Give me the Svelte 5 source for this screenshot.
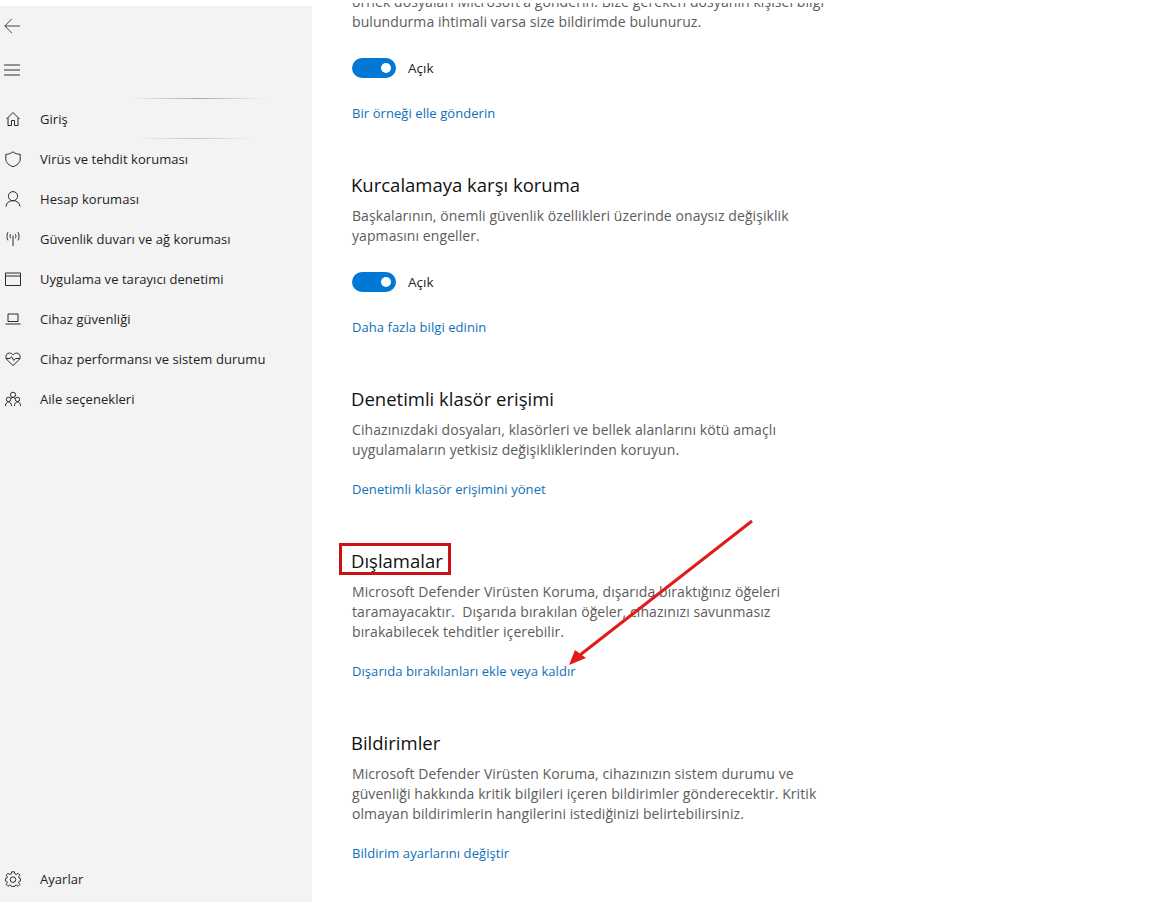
<script lang="ts">
  const NAV = [
    { label: 'Giriş', icon: 'home' },
    { label: 'Virüs ve tehdit koruması', icon: 'shield' },
    { label: 'Hesap koruması', icon: 'person' },
    { label: 'Güvenlik duvarı ve ağ koruması', icon: 'radio' },
    { label: 'Uygulama ve tarayıcı denetimi', icon: 'window' },
    { label: 'Cihaz güvenliği', icon: 'laptop' },
    { label: 'Cihaz performansı ve sistem durumu', icon: 'heart' },
    { label: 'Aile seçenekleri', icon: 'family' },
  ]

  const ICONS: Record<string, string[]> = {
    home: ['M1.5 8 8 1.5 14.5 8', 'M3 6.8V14.5H6.5V9.5H9.5V14.5H13V6.8'],
    shield: ['M8 .8C5.8 2.6 3.4 3.3.8 3.3V8C.8 11.8 4 14.3 8 15.7 12 14.3 15.2 11.8 15.2 8V3.3C12.6 3.3 10.2 2.6 8 .8Z'],
    person: ['M8 .6A4.6 4.6 0 1 0 8 9.8 4.6 4.6 0 1 0 8 .6Z', 'M1 15.5C1.4 11.8 4.2 9.6 8 9.6S14.6 11.8 15 15.5'],
    radio: ['M8 4.5V15', 'M5.6 3.2C4.9 4.6 4.9 6 5.6 7.4', 'M10.4 3.2C11.1 4.6 11.1 6 10.4 7.4', 'M3 1.2C1.6 3.8 1.6 6.8 3 9.4', 'M13 1.2C14.4 3.8 14.4 6.8 13 9.4'],
    window: ['M.5 2H15.5V14.5H.5Z', 'M.5 5H15.5'],
    laptop: ['M3 3H13V10.5H3Z', 'M.5 13H15.5'],
    heart: ['M8 14.5 2.2 9C-.2 6.6.8 2.4 4.2 2.1 5.8 2 7.2 2.8 8 4 8.8 2.8 10.2 2 11.8 2.1 15.2 2.4 16.2 6.6 13.8 9Z', 'M.8 7.5H5L6.5 5.6 8.8 9.5 10.4 7.5H15.2'],
    family: ['M8 1.2A2.6 2.6 0 1 0 8 6.4 2.6 2.6 0 1 0 8 1.2Z', 'M3.5 6.2A2.2 2.2 0 1 0 3.5 10.6 2.2 2.2 0 1 0 3.5 6.2Z', 'M12.5 6.2A2.2 2.2 0 1 0 12.5 10.6 2.2 2.2 0 1 0 12.5 6.2Z', 'M.4 15C.6 12.4 1.8 11 3.5 11S6.4 12.4 6.6 15', 'M9.4 15C9.6 12.4 10.8 11 12.5 11S15.4 12.4 15.6 15', 'M5.4 8C6 7 7 6.5 8 6.5S10 7 10.6 8'],
    gear: ['M6.6.8H9.4L9.8 2.9 11.3 3.5 13 2.3 14.9 4.2 13.7 5.9 14.3 7.4 15.6 7.7V9.9L14.3 10.2 13.7 11.7 14.9 13.4 13 15.3 11.3 14.1 9.8 14.7 9.4 15.6H6.6L6.2 14.7 4.7 14.1 3 15.3 1.1 13.4 2.3 11.7 1.7 10.2.4 9.9V7.7L1.7 7.4 2.3 5.9 1.1 4.2 3 2.3 4.7 3.5 6.2 2.9Z', 'M8 5.8A2.8 2.8 0 1 0 8 11.4 2.8 2.8 0 1 0 8 5.8Z'],
  }

  const SECTIONS = [
    { lines: ["örnek dosyaları Microsoft'a gönderin. Bize gereken dosyanın kişisel bilgi", 'bulundurma ihtimali varsa size bildirimde bulunuruz.'], toggle: true, link: 'Bir örneği elle gönderin' },
    { title: 'Kurcalamaya karşı koruma', lines: ['Başkalarının, önemli güvenlik özellikleri üzerinde onaysız değişiklik', 'yapmasını engeller.'], toggle: true, link: 'Daha fazla bilgi edinin' },
    { title: 'Denetimli klasör erişimi', lines: ['Cihazınızdaki dosyaları, klasörleri ve bellek alanlarını kötü amaçlı', 'uygulamaların yetkisiz değişikliklerinden koruyun.'], link: 'Denetimli klasör erişimini yönet' },
    { title: 'Dışlamalar', boxed: true, lines: ['Microsoft Defender Virüsten Koruma, dışarıda bıraktığınız öğeleri', 'taramayacaktır.  Dışarıda bırakılan öğeler, cihazınızı savunmasız', 'bırakabilecek tehditler içerebilir.'], link: 'Dışarıda bırakılanları ekle veya kaldır' },
    { title: 'Bildirimler', lines: ['Microsoft Defender Virüsten Koruma, cihazınızın sistem durumu ve', 'güvenliği hakkında kritik bilgileri içeren bildirimler gönderecektir. Kritik', 'olmayan bildirimlerin hangilerini istediğinizi belirtebilirsiniz.'], link: 'Bildirim ayarlarını değiştir' },
  ]
</script>

{#snippet icon(name: string)}
  <svg class="icon" viewBox="0 0 16 16" width="16" height="16" fill="none" stroke="#2b2b2b" stroke-width="1">
    {#each ICONS[name] as d}
      <path {d} />
    {/each}
  </svg>
{/snippet}

<div class="page">
  <aside class="sidebar">
    <button class="top-btn back" aria-label="Geri">
      <svg viewBox="0 0 16 16" width="16" height="16" fill="none" stroke="#444" stroke-width="1">
        <path d="M16 8H.8M7.8 .8.8 8l7 7" />
      </svg>
    </button>
    <button class="top-btn menu" aria-label="Menü">
      <svg viewBox="0 0 16 12" width="16" height="12" fill="none" stroke="#333" stroke-width="1">
        <path d="M0 1H16M0 6H16M0 11H16" />
      </svg>
    </button>

    <nav class="nav">
      {#each NAV as item, i}
        <div class="nav-row" class:shade={i < 2} class:second={i === 1}>
          <span class="slot">{@render icon(item.icon)}</span>
          <span>{item.label}</span>
        </div>
      {/each}
    </nav>

    <div class="nav-row settings">
      <span class="slot">{@render icon('gear')}</span>
      <span>Ayarlar</span>
    </div>
  </aside>

  <main class="main">
    <div class="scroll">
      {#each SECTIONS as s}
        <section class="section">
          {#if s.title}
            <h2 class:boxed={s.boxed}>{s.title}</h2>
          {/if}
          <p>
            {#each s.lines as line, i}
              {#if i > 0}<br />{/if}{line}
            {/each}
          </p>
          {#if s.toggle}
            <div class="toggle-row">
              <span class="toggle"><span class="knob"></span></span>
              <span class="toggle-label">Açık</span>
            </div>
          {/if}
          <a class="link" class:after-toggle={s.toggle} href="#top">{s.link}</a>
        </section>
      {/each}
    </div>
  </main>

  <svg class="arrow" width="1174" height="902" viewBox="0 0 1174 902" fill="none">
    <path d="M752 521 580 655" stroke="#e01b1b" stroke-width="3" />
    <path d="M569 665 575 650 586 658Z" fill="#e01b1b" />
  </svg>
</div>

<style>
  :global(body) {
    background: #fff;
  }

  .page {
    position: relative;
    display: flex;
    height: 902px;
    overflow: hidden;
    font-family: "Open Sans", "Noto Sans", sans-serif;
    font-size: 13px;
  }

  .sidebar {
    width: 312px;
    flex-shrink: 0;
    margin-top: 6px;
    background: #f3f3f3;
    display: flex;
    flex-direction: column;
  }

  .top-btn {
    display: flex;
    align-items: center;
    background: none;
    border: none;
    padding: 0 0 0 4px;
    height: 44px;
  }

  .back {
    margin-top: -2px;
  }

  .nav {
    margin-top: 7px;
    flex: 1;
  }

  .nav-row {
    position: relative;
    display: flex;
    align-items: center;
    height: 40px;
    color: #222;
    letter-spacing: 0.05px;
  }

  .shade::before {
    content: '';
    position: absolute;
    left: 130px;
    top: -1px;
    width: 136px;
    height: 1px;
    background: linear-gradient(90deg, rgba(150, 150, 150, 0), #aaa 50%, rgba(150, 150, 150, 0));
  }

  .shade.second::before {
    left: 135px;
    width: 120px;
    background: linear-gradient(90deg, rgba(170, 170, 170, 0), #c4c4c4 50%, rgba(170, 170, 170, 0));
  }

  .settings {
    margin-bottom: 3px;
  }

  .slot {
    width: 26px;
    margin-right: 14px;
    display: flex;
    justify-content: center;
    flex-shrink: 0;
  }

  .main {
    flex: 1;
    margin-top: 3px;
    overflow: hidden;
    padding-left: 40px;
  }

  .scroll {
    margin-top: -11px;
    width: 520px;
  }

  .section {
    padding-bottom: 48px;
  }

  h2 {
    position: relative;
    margin: 0 0 7px -1px;
    font-size: 18.5px;
    font-weight: 400;
    line-height: 28px;
    color: #111;
  }

  h2.boxed::after {
    content: '';
    position: absolute;
    left: -12px;
    top: -4px;
    width: 106px;
    height: 26px;
    border: 3px solid #cc1016;
  }

  p {
    margin: 0;
    font-size: 14px;
    line-height: 20px;
    letter-spacing: 0.08px;
    color: #5c5c5c;
    white-space: pre-wrap;
  }

  .toggle-row {
    display: flex;
    align-items: center;
    gap: 12px;
    margin-top: 26px;
    height: 20px;
  }

  .toggle {
    display: flex;
    justify-content: flex-end;
    align-items: center;
    width: 44px;
    height: 20px;
    padding-right: 5px;
    box-sizing: border-box;
    border-radius: 10px;
    background: #0078d4;
  }

  .knob {
    width: 10px;
    height: 10px;
    border-radius: 50%;
    background: #fff;
  }

  .toggle-label {
    font-size: 13.5px;
    color: #222;
  }

  .link {
    display: block;
    margin-top: 19px;
    line-height: 20px;
    letter-spacing: 0.07px;
    color: #0f6fb8;
    text-decoration: none;
  }

  .link.after-toggle {
    margin-top: 25px;
  }

  .arrow {
    position: absolute;
    left: 0;
    top: 0;
    pointer-events: none;
  }
</style>
